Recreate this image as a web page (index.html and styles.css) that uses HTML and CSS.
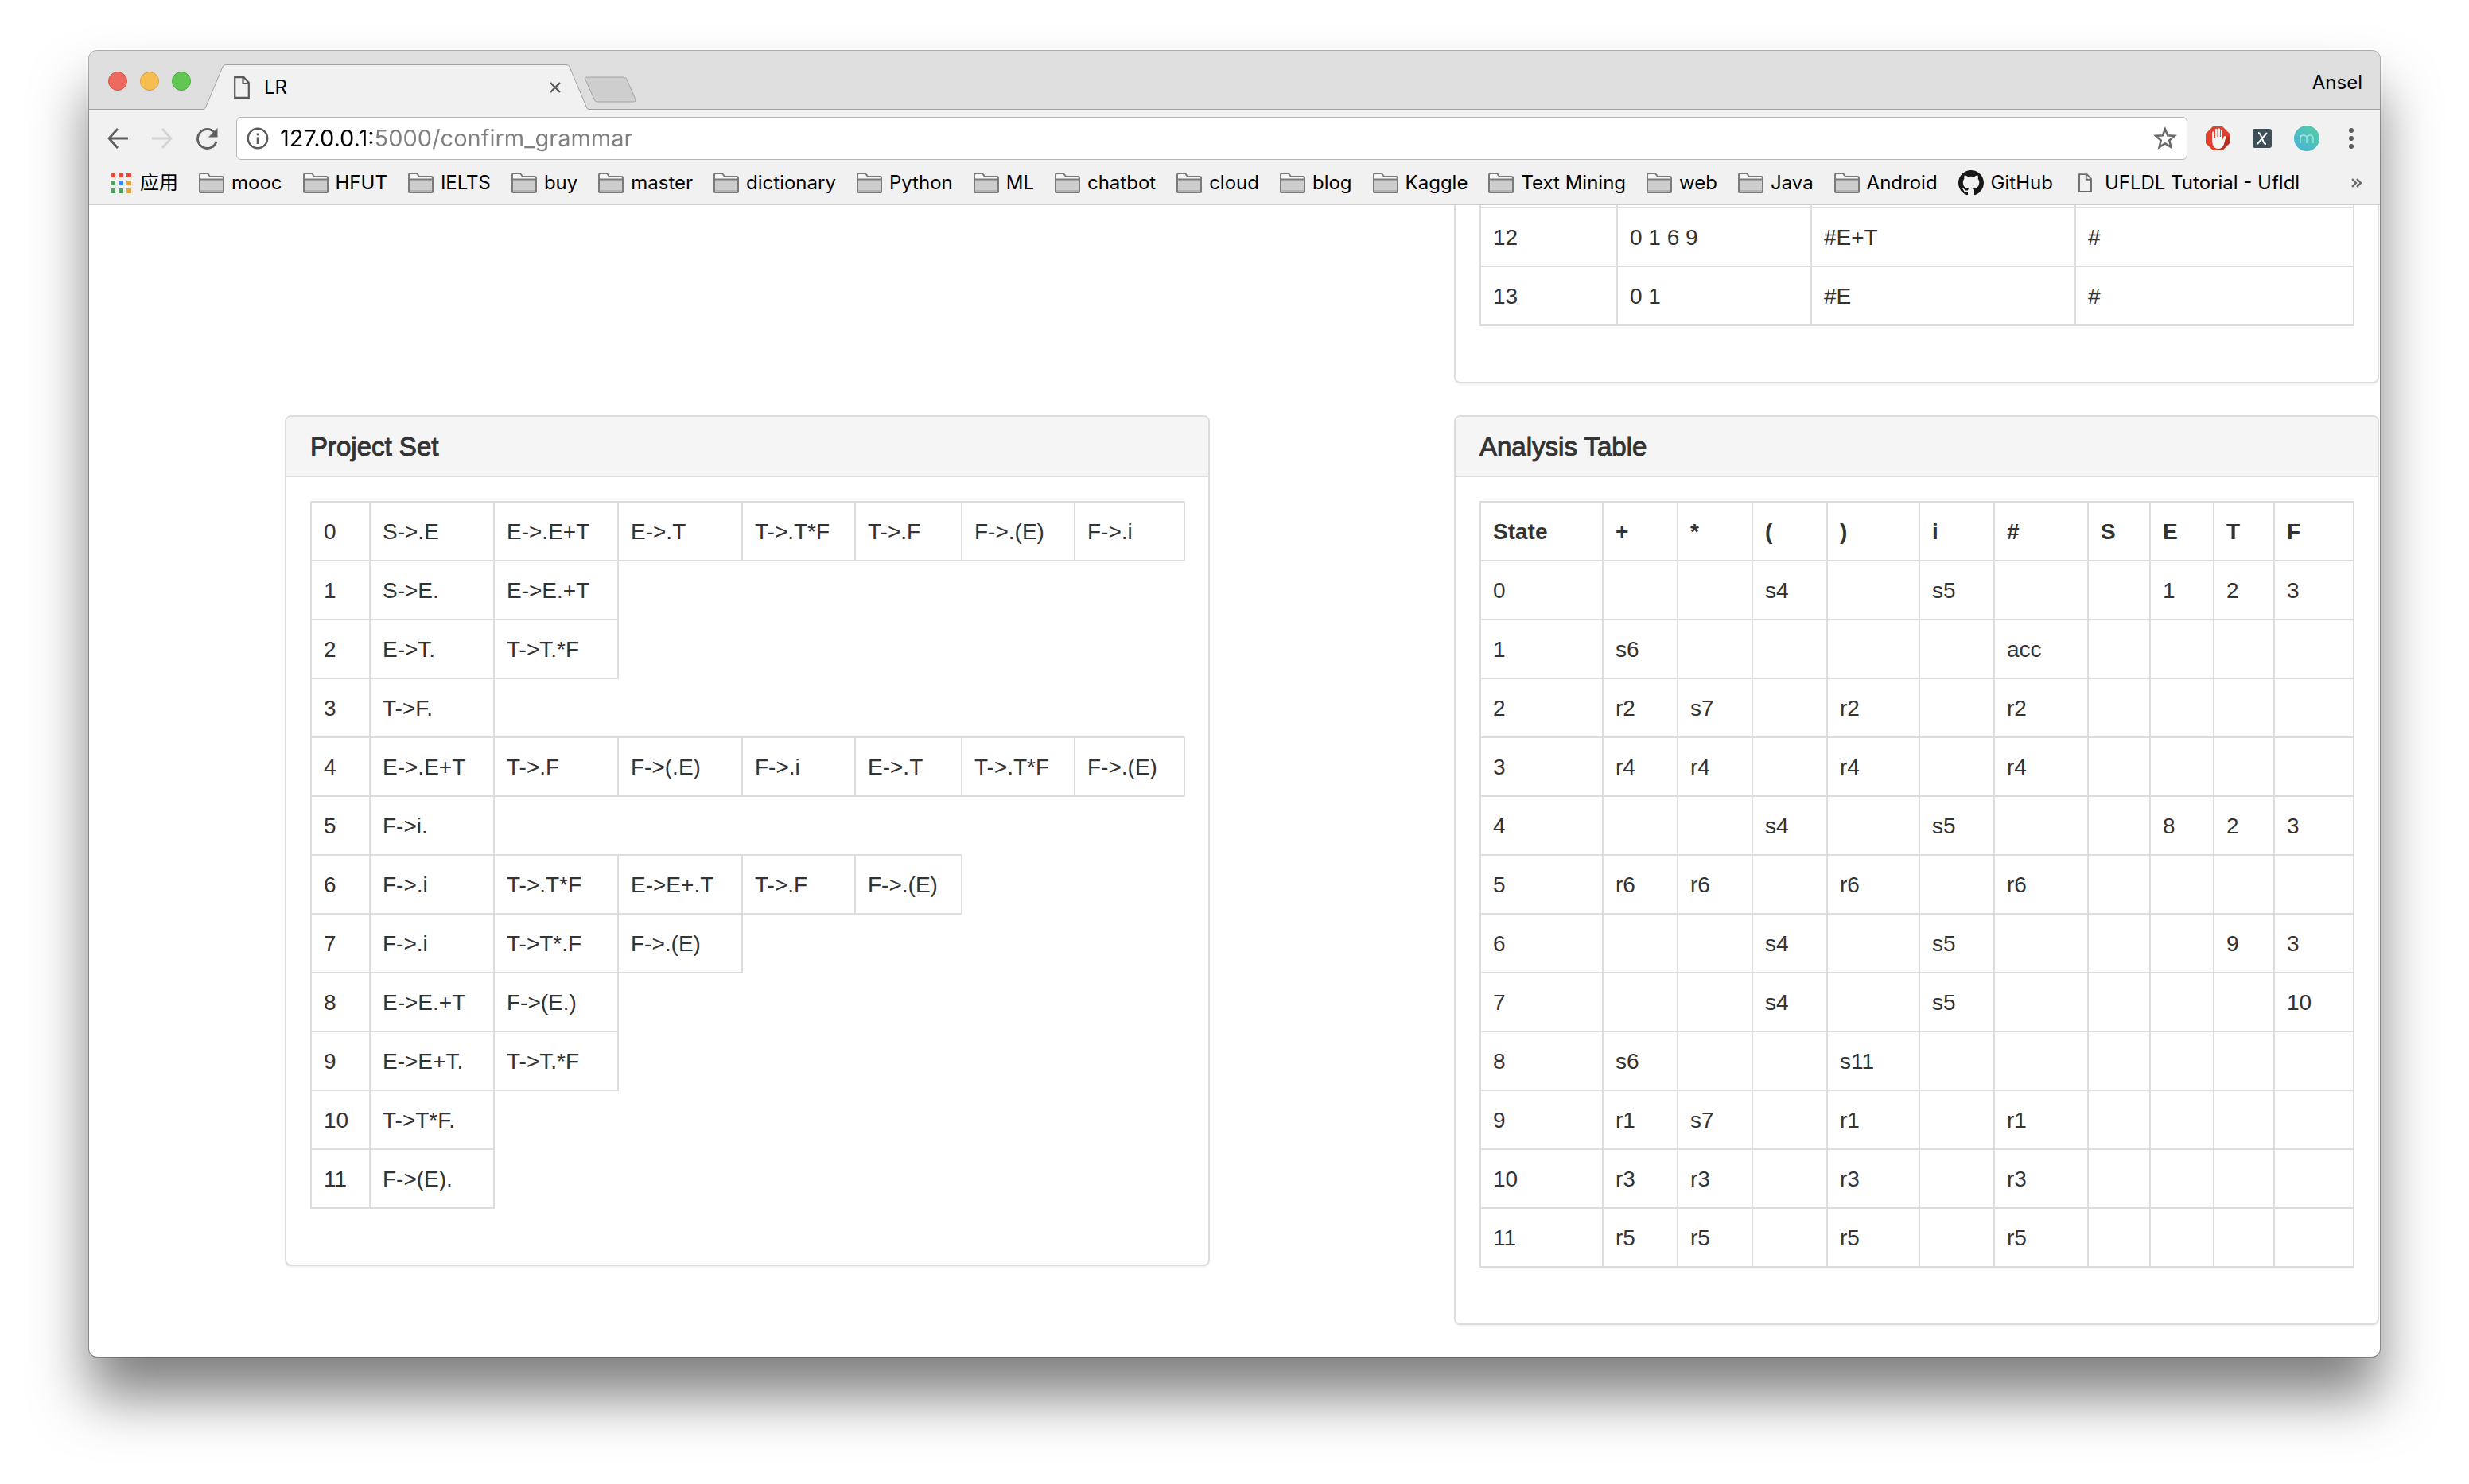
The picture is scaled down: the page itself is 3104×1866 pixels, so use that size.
FILE: index.html
```html
<!DOCTYPE html>
<html lang="en">
<head>
<meta charset="utf-8">
<title>LR</title>
<link rel="stylesheet" href="styles.css">
</head>
<body>
<svg class="defs" aria-hidden="true">
  <symbol id="folder" viewBox="0 0 32 26">
    <path d="M1 24V3Q1 1 3 1H11L14 5H29Q31 5 31 7V24Q31 25 30 25H2Q1 25 1 24Z" fill="#f7f7f7"/>
    <path d="M1 8H31V24Q31 25 30 25H2Q1 25 1 24Z" fill="#cdcdcd"/>
    <path d="M2 22H30V24H2Z" fill="#b4b4b4"/>
    <path d="M1 24V3Q1 1 3 1H11L14 5H29Q31 5 31 7V24Q31 25 30 25H2Q1 25 1 24ZM1 8.500H31" fill="none" stroke="#7b7b7b" stroke-width="2"/>
  </symbol>
  <symbol id="page" viewBox="0 0 20 28">
    <path d="M1.200 1.200H12.500L18.800 8V26.800H1.200ZM11.500 1.500V9H18.500" fill="none" stroke="currentColor" stroke-width="2.200"/>
  </symbol>
</svg>
<div class="window">
  <header class="titlebar">
    <div class="lights">
      <button class="light close" aria-label="Close"></button>
      <button class="light minimize" aria-label="Minimize"></button>
      <button class="light zoom" aria-label="Zoom"></button>
    </div>
    <div class="tab">
      <svg class="tab-shape" viewBox="0 0 484 57" preserveAspectRatio="none" aria-hidden="true"><path d="M0 57Q2 56 3 53L24 3Q25 .5 28 .5H456Q459 .5 460 3L481 53Q482 56 484 57Z" fill="#f1f1f1"/><path d="M0 56.500Q2 56 3 53L24 3Q25 .5 28 .5H456Q459 .5 460 3L481 53Q482 56 484 56.500" fill="none" stroke="#a0a0a0"/></svg>
      <svg class="tab-icon" aria-hidden="true"><use href="#page"/></svg>
      <span class="tab-title">LR</span>
      <button class="tab-close" aria-label="Close tab"><svg width="14" height="14" viewBox="0 0 14 14"><path d="M1 1L13 13M13 1L1 13" stroke="#5a5a5a" stroke-width="2.400"/></svg></button>
    </div>
    <button class="new-tab" aria-label="New tab"><svg width="66" height="33" viewBox="0 0 66 33"><path d="M4 1H50Q53 1 54 4L65 29Q66 32 62 32H17Q14 32 13 29L2 4Q0 1 4 1Z" fill="#cecece" stroke="#a3a3a3"/></svg></button>
    <button class="profile">Ansel</button>
  </header>
  <div class="toolbar">
    <button aria-label="Back"><svg width="28" height="28" viewBox="0 0 28 28"><path d="M14 2L3 14L14 26M3 14H27" fill="none" stroke="#5f5f5f" stroke-width="2.800"/></svg></button>
    <button aria-label="Forward" disabled><svg width="28" height="28" viewBox="0 0 28 28"><path d="M14 2L25 14L14 26M25 14H1" fill="none" stroke="#d3d3d3" stroke-width="2.800"/></svg></button>
    <button aria-label="Reload"><svg width="28" height="28" viewBox="0 0 28 28"><path d="M23.500 6.500A12 12 0 1 0 26 18" fill="none" stroke="#5f5f5f" stroke-width="2.800"/><path d="M27.500 1V12.500H16Z" fill="#5f5f5f"/></svg></button>
    <div class="omnibox">
      <svg width="28" height="28" viewBox="0 0 28 28" aria-hidden="true"><circle cx="14" cy="14" r="12.200" fill="none" stroke="#5a5a5a" stroke-width="2.400"/><path d="M12.700 12.500H15.300V21H12.700ZM12.700 7.500H15.300V10.300H12.700Z" fill="#5a5a5a"/></svg>
      <input class="url" type="text" aria-label="Address" value="127.0.0.1:5000/confirm_grammar">
      <button aria-label="Bookmark this page"><svg width="30" height="30" viewBox="0 0 30 30"><path d="M15 3.500L18.200 11.200L26.800 11.900L20.300 17.500L22.300 25.900L15 21.400L7.700 25.900L9.700 17.500L3.200 11.900L11.800 11.200Z" fill="none" stroke="#6a6a6a" stroke-width="2.600"/></svg></button>
    </div>
    <div class="extensions">
      <button aria-label="Ad blocker"><svg width="32" height="32" viewBox="0 0 32 32"><path d="M10 1H22L31 10V22L22 31H10L1 22V10Z" fill="#e2402f"/><path d="M16 31H22L31 22V14L24 12Z" fill="#b9301f"/><path d="M9 11V20Q10 29 17 29Q22 29 24 23L26.500 14Q25 12 23.500 14L22 18V6.500Q21 5 20 6.500V14H19V4Q17.700 2.500 16.500 4V14H15.500V4.500Q14 3 13 4.500V15H12V8Q10.500 6.500 9.200 8Z" fill="#f5f5f5"/></svg></button>
      <button aria-label="X extension"><svg width="24" height="24" viewBox="0 0 24 24"><rect width="24" height="24" rx="3" fill="#3e4f58"/><path d="M7 5Q9 5 10 8L14 17Q15 19 17 19M18 5L6 19" fill="none" stroke="#fff" stroke-width="2"/></svg></button>
      <button aria-label="Momentum"><svg width="32" height="32" viewBox="0 0 32 32"><defs><linearGradient id="mint" x1="1" y1="0" x2="0" y2="1"><stop offset="0" stop-color="#59cfa4"/><stop offset="1" stop-color="#45b1d8"/></linearGradient></defs><circle cx="16" cy="16" r="16" fill="url(#mint)"/><path d="M8 22V12M8 16Q8 12 12 12Q16 12 16 16V22M16 16Q16 12 20 12Q24 12 24 16V22" fill="none" stroke="#a5e4dc" stroke-width="1.500"/></svg></button>
    </div>
    <button aria-label="Menu"><svg width="8" height="28" viewBox="0 0 8 28"><g fill="#5a5a5a"><circle cx="4" cy="4" r="3"/><circle cx="4" cy="14" r="3"/><circle cx="4" cy="24" r="3"/></g></svg></button>
  </div>
  <nav class="bookmarks">
    <a href="#" class="apps"><svg width="26" height="26" viewBox="0 0 26 26" aria-hidden="true"><path d="M0 0H6V6H0ZM10 0H16V6H10ZM20 0H26V6H20Z" fill="#e24a3b"/><path d="M0 10H6V16H0ZM0 20H6V26H0ZM10 20H16V26H10Z" fill="#53a162"/><path d="M10 10H16V16H10Z" fill="#4285f4"/><path d="M20 10H26V16H20ZM20 20H26V26H20Z" fill="#e5a638"/></svg>应用</a>
    <a href="#"><svg class="folder" aria-hidden="true"><use href="#folder"/></svg>mooc</a>
    <a href="#"><svg class="folder" aria-hidden="true"><use href="#folder"/></svg>HFUT</a>
    <a href="#"><svg class="folder" aria-hidden="true"><use href="#folder"/></svg>IELTS</a>
    <a href="#"><svg class="folder" aria-hidden="true"><use href="#folder"/></svg>buy</a>
    <a href="#"><svg class="folder" aria-hidden="true"><use href="#folder"/></svg>master</a>
    <a href="#"><svg class="folder" aria-hidden="true"><use href="#folder"/></svg>dictionary</a>
    <a href="#"><svg class="folder" aria-hidden="true"><use href="#folder"/></svg>Python</a>
    <a href="#"><svg class="folder" aria-hidden="true"><use href="#folder"/></svg>ML</a>
    <a href="#"><svg class="folder" aria-hidden="true"><use href="#folder"/></svg>chatbot</a>
    <a href="#"><svg class="folder" aria-hidden="true"><use href="#folder"/></svg>cloud</a>
    <a href="#"><svg class="folder" aria-hidden="true"><use href="#folder"/></svg>blog</a>
    <a href="#"><svg class="folder" aria-hidden="true"><use href="#folder"/></svg>Kaggle</a>
    <a href="#"><svg class="folder" aria-hidden="true"><use href="#folder"/></svg>Text Mining</a>
    <a href="#"><svg class="folder" aria-hidden="true"><use href="#folder"/></svg>web</a>
    <a href="#"><svg class="folder" aria-hidden="true"><use href="#folder"/></svg>Java</a>
    <a href="#"><svg class="folder" aria-hidden="true"><use href="#folder"/></svg>Android</a>
    <a href="#"><svg width="32" height="32" viewBox="0 0 16 16" aria-hidden="true"><path fill="#191717" d="M8 0C3.580 0 0 3.580 0 8c0 3.540 2.290 6.530 5.470 7.590.4.070.55-.17.55-.38 0-.19-.01-.82-.01-1.490-2.010.37-2.530-.49-2.690-.94-.09-.23-.48-.94-.82-1.130-.28-.15-.68-.52-.01-.53.63-.01 1.080.58 1.230.82.72 1.210 1.870.87 2.330.66.070-.52.28-.87.51-1.070-1.780-.2-3.640-.89-3.640-3.950 0-.87.31-1.590.82-2.150-.08-.2-.36-1.020.08-2.120 0 0 .67-.21 2.200.82.64-.18 1.320-.27 2-.27s1.360.09 2 .27c1.530-1.040 2.200-.82 2.200-.82.44 1.100.16 1.920.08 2.120.51.56.82 1.270.82 2.150 0 3.070-1.870 3.750-3.650 3.950.29.25.54.73.54 1.480 0 1.070-.01 1.930-.01 2.200 0 .21.15.46.55.38A8.010 8.010 0 0 0 16 8c0-4.420-3.580-8-8-8z"/></svg>GitHub</a>
    <a href="#" class="page-link"><svg class="page" aria-hidden="true"><use href="#page"/></svg>UFLDL Tutorial - Ufldl</a>
    <button class="more" aria-label="More bookmarks"><svg width="14" height="12" viewBox="0 0 14 12"><path d="M1 1L6 6L1 11M7 1L12 6L7 11" fill="none" stroke="#6a6a6a" stroke-width="2.400"/></svg></button>
  </nav>
  <main class="viewport">
    <div class="grid">
      <section class="panel steps-panel">
        <div class="panel-body">
          <table class="steps">
            <colgroup><col class="w172"><col class="w244"><col class="w332"><col class="w350"></colgroup>
            <tbody>
              <tr><td></td><td></td><td></td><td></td></tr>
              <tr><td>12</td><td>0 1 6 9</td><td>#E+T</td><td>#</td></tr>
              <tr><td>13</td><td>0 1</td><td>#E</td><td>#</td></tr>
            </tbody>
          </table>
        </div>
      </section>
      <section class="panel">
        <div class="panel-heading"><h3>Project Set</h3></div>
        <div class="panel-body">
          <table>
            <colgroup><col class="w74"><col class="w156"><col class="w156"><col class="w156"><col class="w142"><col class="w134"><col class="w142"><col class="w138"></colgroup>
            <tbody>
              <tr><td>0</td><td>S-&gt;.E</td><td>E-&gt;.E+T</td><td>E-&gt;.T</td><td>T-&gt;.T*F</td><td>T-&gt;.F</td><td>F-&gt;.(E)</td><td>F-&gt;.i</td></tr>
              <tr><td>1</td><td>S-&gt;E.</td><td>E-&gt;E.+T</td></tr>
              <tr><td>2</td><td>E-&gt;T.</td><td>T-&gt;T.*F</td></tr>
              <tr><td>3</td><td>T-&gt;F.</td></tr>
              <tr><td>4</td><td>E-&gt;.E+T</td><td>T-&gt;.F</td><td>F-&gt;(.E)</td><td>F-&gt;.i</td><td>E-&gt;.T</td><td>T-&gt;.T*F</td><td>F-&gt;.(E)</td></tr>
              <tr><td>5</td><td>F-&gt;i.</td></tr>
              <tr><td>6</td><td>F-&gt;.i</td><td>T-&gt;.T*F</td><td>E-&gt;E+.T</td><td>T-&gt;.F</td><td>F-&gt;.(E)</td></tr>
              <tr><td>7</td><td>F-&gt;.i</td><td>T-&gt;T*.F</td><td>F-&gt;.(E)</td></tr>
              <tr><td>8</td><td>E-&gt;E.+T</td><td>F-&gt;(E.)</td></tr>
              <tr><td>9</td><td>E-&gt;E+T.</td><td>T-&gt;T.*F</td></tr>
              <tr><td>10</td><td>T-&gt;T*F.</td></tr>
              <tr><td>11</td><td>F-&gt;(E).</td></tr>
            </tbody>
          </table>
        </div>
      </section>
      <section class="panel">
        <div class="panel-heading"><h3>Analysis Table</h3></div>
        <div class="panel-body">
          <table>
            <colgroup><col class="w154"><col class="w94"><col class="w94"><col class="w94"><col class="w116"><col class="w94"><col class="w118"><col class="w78"><col class="w80"><col class="w76"><col class="w100"></colgroup>
            <thead>
              <tr><th>State</th><th>+</th><th>*</th><th>(</th><th>)</th><th>i</th><th>#</th><th>S</th><th>E</th><th>T</th><th>F</th></tr>
            </thead>
            <tbody>
              <tr><td>0</td><td></td><td></td><td>s4</td><td></td><td>s5</td><td></td><td></td><td>1</td><td>2</td><td>3</td></tr>
              <tr><td>1</td><td>s6</td><td></td><td></td><td></td><td></td><td>acc</td><td></td><td></td><td></td><td></td></tr>
              <tr><td>2</td><td>r2</td><td>s7</td><td></td><td>r2</td><td></td><td>r2</td><td></td><td></td><td></td><td></td></tr>
              <tr><td>3</td><td>r4</td><td>r4</td><td></td><td>r4</td><td></td><td>r4</td><td></td><td></td><td></td><td></td></tr>
              <tr><td>4</td><td></td><td></td><td>s4</td><td></td><td>s5</td><td></td><td></td><td>8</td><td>2</td><td>3</td></tr>
              <tr><td>5</td><td>r6</td><td>r6</td><td></td><td>r6</td><td></td><td>r6</td><td></td><td></td><td></td><td></td></tr>
              <tr><td>6</td><td></td><td></td><td>s4</td><td></td><td>s5</td><td></td><td></td><td></td><td>9</td><td>3</td></tr>
              <tr><td>7</td><td></td><td></td><td>s4</td><td></td><td>s5</td><td></td><td></td><td></td><td></td><td>10</td></tr>
              <tr><td>8</td><td>s6</td><td></td><td></td><td>s11</td><td></td><td></td><td></td><td></td><td></td><td></td></tr>
              <tr><td>9</td><td>r1</td><td>s7</td><td></td><td>r1</td><td></td><td>r1</td><td></td><td></td><td></td><td></td></tr>
              <tr><td>10</td><td>r3</td><td>r3</td><td></td><td>r3</td><td></td><td>r3</td><td></td><td></td><td></td><td></td></tr>
              <tr><td>11</td><td>r5</td><td>r5</td><td></td><td>r5</td><td></td><td>r5</td><td></td><td></td><td></td><td></td></tr>
            </tbody>
          </table>
        </div>
      </section>
    </div>
  </main>
</div>
</body>
</html>
```
FILE: styles.css
```css
* { box-sizing: border-box; }

body {
  margin: 0;
  height: 100vh;
  padding: 64px 112px 160px;
  display: flex;
  flex-direction: column;
  background: #fff;
  color: #333;
  font: 28px/40px "Liberation Sans", Arial, sans-serif;
}

button {
  display: flex;
  padding: 0;
  border: 0;
  background: none;
  color: inherit;
  font: inherit;
}

svg { display: block; flex: none; }
.defs { position: absolute; width: 0; height: 0; }

.window {
  flex: 1;
  min-height: 0;
  display: flex;
  flex-direction: column;
  border-radius: 10px;
  overflow: hidden;
  background: #fff;
  box-shadow: 0 0 0 1px rgba(0, 0, 0, .3), 0 50px 70px rgba(0, 0, 0, .5);
}

.titlebar, .toolbar, .bookmarks {
  flex: none;
  display: flex;
  align-items: center;
  color: #000;
  font: 24px/32px Inter, "Noto Sans CJK SC", sans-serif;
}

/* Title bar */
.titlebar {
  height: 74px;
  padding: 2px 22px 0 24px;
  background: linear-gradient(#a0a0a0, #a0a0a0) bottom / 100% 1px no-repeat #dedede;
}
.lights { display: flex; gap: 16px; width: 120px; }
.light { width: 24px; height: 24px; border: 1px solid; border-radius: 50%; }
.close { background: #ee6a5f; border-color: #d35448; }
.minimize { background: #f6be50; border-color: #d8a040; }
.zoom { background: #62c655; border-color: #4ea73f; }
.tab {
  position: relative;
  align-self: flex-end;
  display: flex;
  align-items: center;
  width: 484px;
  height: 57px;
  padding: 0 35px 0 38px;
}
.tab-shape { position: absolute; inset: 0; width: 100%; height: 100%; }
.tab-icon { position: relative; width: 20px; height: 28px; color: #5a5a5a; }
.tab-title { position: relative; flex: 1; padding-left: 18px; }
.tab-close { position: relative; }
.new-tab { margin: 20px auto 0 -6px; }
.profile { padding-top: 4px; }

/* Toolbar */
.toolbar {
  height: 72px;
  padding: 0 32px 0 22px;
  gap: 28px;
  background: #f1f1f1;
}
.omnibox {
  flex: 1;
  display: flex;
  align-items: center;
  height: 54px;
  margin-left: -5px;
  padding: 0 12px;
  gap: 14px;
  border: 1px solid #b5b5b5;
  border-radius: 6px;
  background: #fff;
}
.url {
  flex: 1;
  min-width: 0;
  height: 40px;
  padding: 0;
  border: 0;
  outline: 0;
  color: #000;
  font: 29px/40px Inter, sans-serif;
  /* Host in black, the rest of the address in grey */
  background: linear-gradient(90deg, #000 119px, #808080 119px);
  -webkit-background-clip: text;
  background-clip: text;
  -webkit-text-fill-color: transparent;
}
.extensions { display: flex; align-items: center; gap: 28px; margin: 0 8px 0 -6px; }

/* Bookmarks bar */
.bookmarks {
  height: 48px;
  padding: 0 22px 8px 27px;
  gap: 26px;
  border-bottom: 1px solid #cfcfcf;
  background: #f1f1f1;
  white-space: nowrap;
}
.bookmarks a {
  display: flex;
  align-items: center;
  gap: 9px;
  color: inherit;
  text-decoration: none;
}
.bookmarks .apps { gap: 11px; }
.bookmarks .page-link { gap: 16px; margin-left: 6px; }
.folder { width: 32px; height: 26px; }
.page { width: 17px; height: 24px; color: #6a6a6a; }
.more { margin-left: auto; }

/* Page, scrolled to its end */
.viewport {
  flex: 1;
  min-height: 0;
  display: flex;
  flex-direction: column;
  justify-content: flex-end;
  overflow: hidden;
}
.grid {
  flex: none;
  display: grid;
  grid-template-columns: 1fr 1fr;
  align-items: start;
  gap: 40px 307px;
  padding: 0 1px 40px 246px;
}
.panel {
  min-width: 0;
  border: 2px solid #ddd;
  border-radius: 8px;
  background: #fff;
  box-shadow: 0 2px 2px rgba(0, 0, 0, .05);
}
.steps-panel { grid-column: 2; }
.panel-heading {
  padding: 21px 30px 19px;
  border-bottom: 2px solid #ddd;
  border-radius: 6px 6px 0 0;
  background: #f5f5f5;
}
.panel-heading h3 {
  margin: 0;
  font-size: 33px;
  font-weight: 400;
  line-height: 34px;
  -webkit-text-stroke: 1px #333;
}
.panel-body { padding: 30px; }

table {
  width: 100%;
  margin-bottom: 40px;
  border-collapse: collapse;
  table-layout: fixed;
}
th, td {
  height: 74px;
  padding: 17px 15px 15px;
  border: 2px solid #ddd;
  text-align: left;
  white-space: nowrap;
}
.w74 { width: 74px; }
.w76 { width: 76px; }
.w78 { width: 78px; }
.w80 { width: 80px; }
.w94 { width: 94px; }
.w100 { width: 100px; }
.w116 { width: 116px; }
.w118 { width: 118px; }
.w134 { width: 134px; }
.w138 { width: 138px; }
.w142 { width: 142px; }
.w154 { width: 154px; }
.w156 { width: 156px; }
.w172 { width: 172px; }
.w244 { width: 244px; }
.w332 { width: 332px; }
.w350 { width: 350px; }
```
